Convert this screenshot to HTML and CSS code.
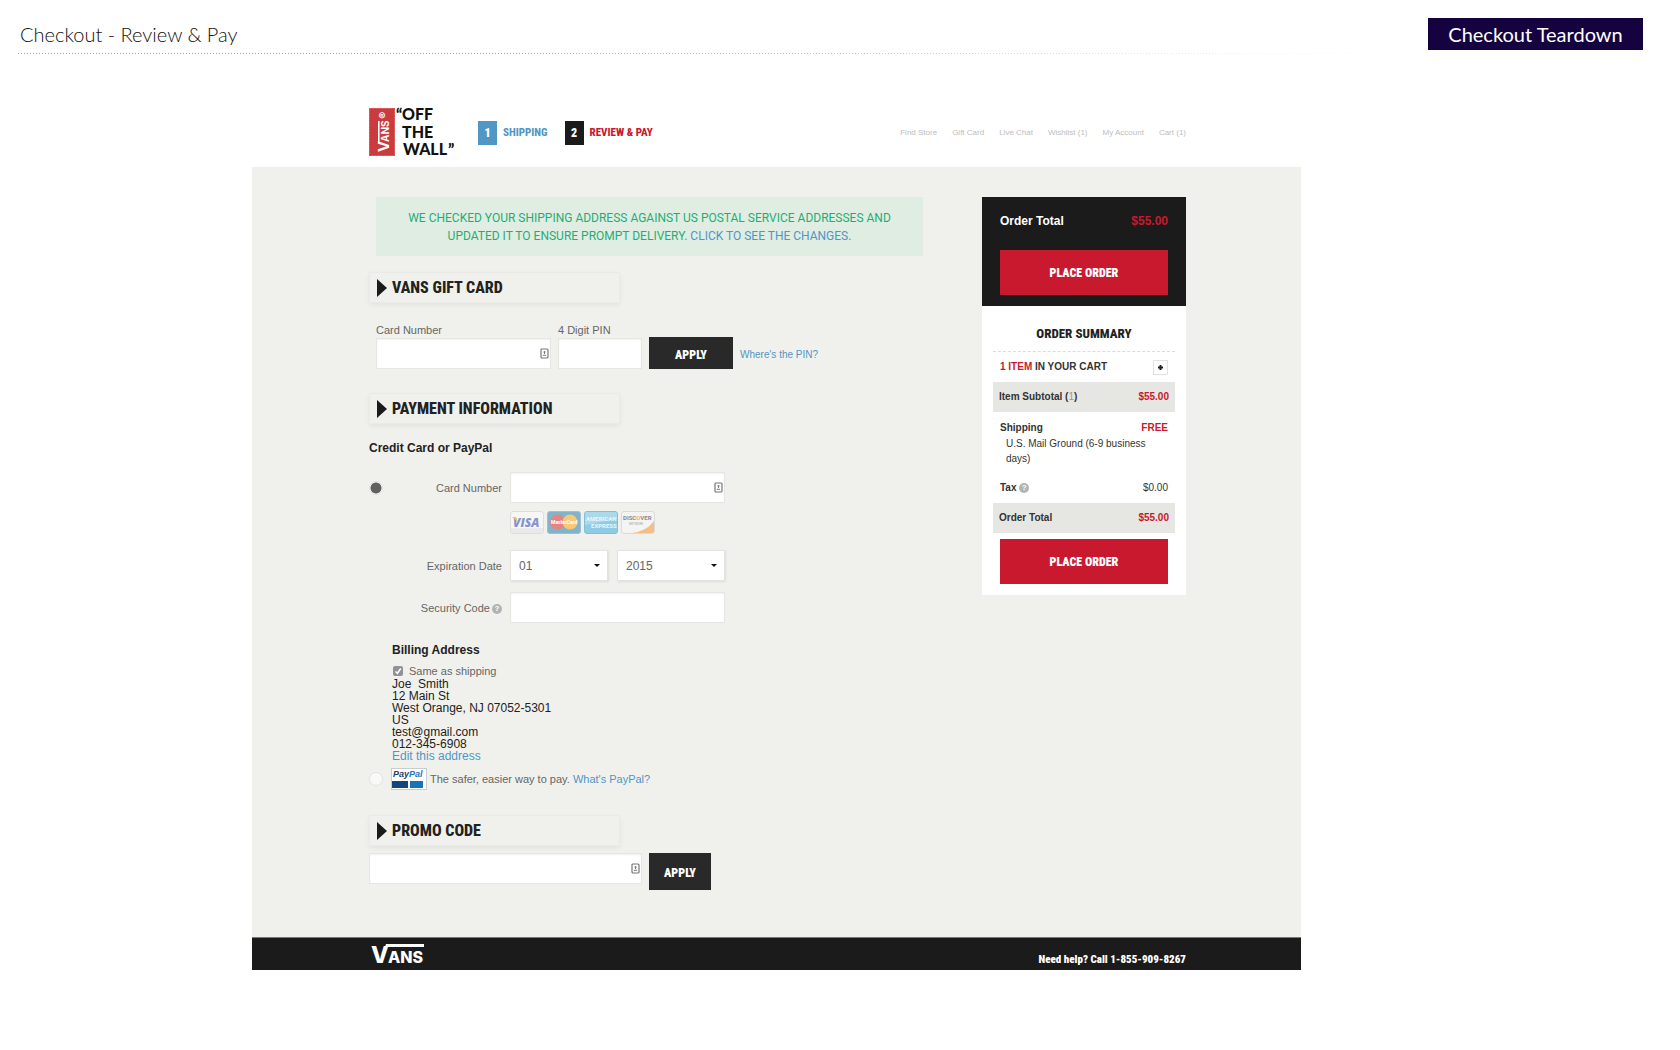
FILE: index.html
```html
<!DOCTYPE html>
<html lang="en">
<head>
<meta charset="utf-8">
<meta name="viewport" content="width=device-width, initial-scale=1">
<title>Checkout - Review &amp; Pay</title>
<link rel="stylesheet" href="styles.css">
</head>
<body>
<svg class="defs" aria-hidden="true">
  <symbol id="autofill" viewBox="0 0 9 11">
    <rect x="1" y="1" width="7" height="9" rx="1" fill="#fff" stroke="#777" stroke-width="1.2"/>
    <circle cx="4.5" cy="4" r="1" fill="#777"/>
    <path d="M4.5 4v2M2.8 7.3h3.4" stroke="#777" stroke-width="1"/>
  </symbol>
</svg>
<header class="topbar">
  <h1 class="topbar-title">Checkout - Review &amp; Pay</h1>
  <a class="topbar-tag" href="#">Checkout Teardown</a>
</header>

<div class="site">
  <header class="site-header">
    <svg class="logo" viewBox="0 0 86 49" role="img" aria-label="Vans Off The Wall">
      <rect x="0" y="0" width="26" height="48" fill="#cb3a3c"/>
      <path d="M.5.500h25v47H.5z" fill="none" stroke="#dd6a68" stroke-width="1" stroke-dasharray="2 1"/>
      <g transform="translate(20 44) rotate(-90)" fill="#fff" font-family="Inter, sans-serif" font-weight="700">
        <text x="0" y="0" font-size="15">V</text>
        <text x="10" y="0" font-size="10">ANS</text>
        <text x="33" y="-2" font-size="11">®</text>
        <rect x="9" y="-11" width="22" height="1.6"/>
      </g>
      <g class="logo-words">
        <text x="27" y="13">“</text>
        <text x="33" y="12">OFF</text>
        <text x="33" y="30">THE</text>
        <text x="34" y="47">WALL</text>
        <text x="79" y="48">”</text>
      </g>
    </svg>
    <ol class="steps">
      <li class="step"><span class="step-num">1</span><a href="#">SHIPPING</a></li>
      <li class="step step-current"><span class="step-num">2</span><a href="#">REVIEW &amp; PAY</a></li>
    </ol>
    <nav class="nav">
      <a href="#">Find Store</a><a href="#">Gift Card</a><a href="#">Live Chat</a><a href="#">Wishlist (1)</a><a href="#">My Account</a><a href="#">Cart (1)</a>
    </nav>
  </header>

  <div class="content">
    <main class="main">
      <p class="notice">WE CHECKED YOUR SHIPPING ADDRESS AGAINST US POSTAL SERVICE ADDRESSES AND<br>UPDATED IT TO ENSURE PROMPT DELIVERY. <a href="#">CLICK TO SEE THE CHANGES.</a></p>

      <h2 class="section-title">VANS GIFT CARD</h2>
      <div class="gift">
        <div class="gift-field gift-card">
          <label for="gift-number">Card Number</label>
          <div class="field"><input id="gift-number" type="text"><svg class="autofill"><use href="#autofill"/></svg></div>
        </div>
        <div class="gift-field gift-pin">
          <label for="gift-pin">4 Digit PIN</label>
          <div class="field"><input id="gift-pin" type="text"></div>
        </div>
        <button class="apply apply-gift" type="button">APPLY</button>
        <a class="pin-link" href="#">Where's the PIN?</a>
      </div>

      <h2 class="section-title">PAYMENT INFORMATION</h2>
      <h3 class="subtitle">Credit Card or PayPal</h3>

      <div class="payment">
        <input class="radio" type="radio" name="method" aria-label="Credit card" checked>
        <label class="row-label" for="card-number">Card Number</label>
        <div class="field"><input id="card-number" type="text"><svg class="autofill"><use href="#autofill"/></svg></div>

        <div class="cards">
          <svg viewBox="0 0 34 23" role="img" aria-label="Visa">
            <rect x=".5" y=".5" width="33" height="22" rx="2.5" fill="#f6f6f5" stroke="#dedede"/>
            <path d="M1 17h32v3q0 2-2 2H3q-2 0-2-2z" fill="#e9e9e9"/>
            <text x="3" y="16" font-size="12" font-weight="800" font-style="italic" fill="#8594cb" font-family="Open Sans, sans-serif">VISA</text>
            <path d="M2 6h4l2 5z" fill="#f2bd71"/>
          </svg>
          <svg viewBox="0 0 34 23" role="img" aria-label="MasterCard">
            <rect x=".5" y=".5" width="33" height="22" rx="2.5" fill="#82b3ca" stroke="#9ac2d3"/>
            <circle cx="10.500" cy="11" r="7.500" fill="#e58481"/>
            <circle cx="23" cy="11" r="7.500" fill="#f6c975"/>
            <text x="4" y="13" font-size="5" font-weight="700" fill="#fff" font-family="Roboto, sans-serif">MasterCard</text>
          </svg>
          <svg viewBox="0 0 34 23" role="img" aria-label="American Express">
            <rect x=".5" y=".5" width="33" height="22" rx="2.500" fill="#8fcbe5" stroke="#83bdd7"/>
            <path d="M1 3q0-2 2-2h28q2 0 2 2v5L1 14z" fill="#aad9ec"/>
            <g font-size="6" font-weight="700" fill="#e9f6fb" font-family="Roboto, sans-serif">
              <text x="2" y="10">AMERICAN</text>
              <text x="7" y="17">EXPRESS</text>
            </g>
          </svg>
          <svg viewBox="0 0 34 23" role="img" aria-label="Discover Network">
            <rect x=".5" y=".5" width="33" height="22" rx="2.500" fill="#f4f4f2" stroke="#dcdad6"/>
            <path d="M33 10v10q0 2-2 2H11Q26 20 33 10z" fill="#f5bd87"/>
            <text x="2" y="9" font-size="6" font-weight="700" fill="#8a8a8a" font-family="Roboto, sans-serif">DISC<tspan fill="#f3b064">O</tspan>VER</text>
            <text x="8" y="14" font-size="3" fill="#a5a5a5" font-family="Roboto, sans-serif">NETWORK</text>
          </svg>
        </div>

        <label class="row-label expiry-label" for="exp-month">Expiration Date</label>
        <div class="expiry">
          <div class="select select-month"><select id="exp-month"><option>01</option></select></div>
          <div class="select select-year"><select aria-label="Expiration year"><option>2015</option></select></div>
        </div>

        <label class="row-label" for="security">Security Code <span class="help help-raised">?</span></label>
        <div class="field"><input id="security" type="text"></div>
      </div>

      <div class="billing">
        <h3 class="billing-title">Billing Address</h3>
        <label class="same">
          <input type="checkbox" checked>
          <svg class="tick" viewBox="0 0 10 10" aria-hidden="true"><path d="M2.500 5.500 4.300 7.300 7.800 2.500" fill="none" stroke="#fff" stroke-width="1.500"/></svg>
          Same as shipping
        </label>
        <address>Joe&nbsp; Smith<br>12 Main St<br>West Orange, NJ 07052-5301<br>US<br>test@gmail.com<br>012-345-6908<br><a href="#">Edit this address</a></address>
      </div>

      <div class="paypal">
        <input class="radio" type="radio" name="method" id="paypal">
        <svg class="paypal-logo" viewBox="0 0 36 22" role="img" aria-label="PayPal">
          <rect x=".5" y=".5" width="35" height="21" fill="#fff" stroke="#c9cdd0"/>
          <text x="2" y="9" font-size="9" font-weight="700" font-style="italic" fill="#1c3f72" font-family="Liberation Sans, sans-serif">Pay<tspan fill="#2079b9">Pal</tspan></text>
          <rect x="1" y="13" width="16" height="7" fill="#15467b"/>
          <rect x="19" y="13" width="13" height="7" fill="#1573b8"/>
        </svg>
        <label for="paypal">The safer, easier way to pay. <a href="#">What's PayPal?</a></label>
      </div>

      <h2 class="section-title">PROMO CODE</h2>
      <div class="promo">
        <div class="field"><input type="text" aria-label="Promo code"><svg class="autofill"><use href="#autofill"/></svg></div>
        <button class="apply apply-promo" type="button">APPLY</button>
      </div>
    </main>

    <aside class="order">
      <div class="order-top">
        <p class="order-total"><span>Order Total</span><span class="red">$55.00</span></p>
        <button class="place" type="button">PLACE ORDER</button>
      </div>
      <div class="summary">
        <h2>ORDER SUMMARY</h2>
        <div class="line cart-line"><b><span class="red">1 ITEM</span> IN YOUR CART</b>
          <button class="expand" type="button" aria-label="Show items"><svg viewBox="0 0 5 5"><path d="M2.500 0v5M0 2.500h5" stroke="#222" stroke-width="2"/></svg></button></div>
        <div class="line shaded"><b>Item Subtotal (<span class="count">1</span>)</b><b class="red">$55.00</b></div>
        <div class="shipping">
          <div class="line"><b>Shipping</b><b class="red">FREE</b></div>
          <p>U.S. Mail Ground (6-9 business days)</p>
        </div>
        <div class="line tax"><span><b>Tax</b> <span class="help">?</span></span><span>$0.00</span></div>
        <div class="line shaded"><b>Order Total</b><b class="red">$55.00</b></div>
        <button class="place" type="button">PLACE ORDER</button>
      </div>
    </aside>
  </div>

  <footer class="footer">
    <svg class="footer-logo" viewBox="0 0 54 20" role="img" aria-label="Vans">
      <g fill="#fff" font-family="Inter, sans-serif" font-weight="800">
        <path d="M14 0h38v3H13z"/>
        <text x="-1" y="19" font-size="23">V</text>
        <text x="16" y="19" font-size="16">ANS</text>
      </g>
    </svg>
    <p>Need help? Call 1-855-909-8267</p>
  </footer>
</div>
</body>
</html>
```
FILE: styles.css
```css
:root { --condensed: "Roboto Condensed", "Open Sans Condensed", Roboto, sans-serif; }
* { box-sizing: border-box; }
body { margin: 0; background: #fff; color: #222; font: 11px/14px "Liberation Sans", Arial, sans-serif; }
h1, h2, h3, p, ol { margin: 0; padding: 0; }
a { color: #5295c5; text-decoration: none; }
button, input, select { font: inherit; margin: 0; border-radius: 0; }
svg { display: block; flex: none; overflow: visible; }
.defs { position: absolute; width: 0; height: 0; }
.red { color: #c8192e; }

.topbar { display: flex; justify-content: space-between; align-items: center; height: 54px; margin: 0 37px 54px 18px; padding-top: 14px; position: relative; }
.topbar::after { content: ""; position: absolute; left: 0; right: 0; bottom: 0; height: 1px; background: repeating-linear-gradient(90deg, #aaa 0 1px, transparent 1px 3px); mask-image: linear-gradient(90deg, #000 30%, transparent 85%); }
.topbar-title { padding-left: 2px; font: 300 20px/32px Lato, sans-serif; color: #111; }
.topbar-tag { width: 215px; height: 32px; margin-bottom: 1px; background: #15033f; color: #fff; font: 400 20px/32px Lato, sans-serif; text-align: center; }

.site { margin: 0 379px 80px 252px; }
.site-header { display: flex; align-items: center; height: 59px; padding: 0 115px 10px 117px; }
.logo { width: 86px; height: 49px; }
.logo-words { font-family: Lato, sans-serif; font-weight: 900; font-size: 16px; fill: #111; }
.steps { display: flex; gap: 17px; margin-left: 23px; list-style: none; }
.step { display: flex; align-items: center; gap: 6px; }
.step a { color: #5197c6; font: 800 11px/24px var(--condensed); }
.step-num { width: 19px; height: 24px; background: #5197c6; color: #fff; font: 900 12px/24px var(--condensed); text-align: center; }
.step-current .step-num { background: #1b1b1b; }
.step-current a { color: #c8192e; }
.nav { display: flex; gap: 15px; margin-left: auto; font-size: 8px; }
.nav a { color: #bdbdbd; }

.content { display: flex; justify-content: space-between; align-items: flex-start; min-height: 770px; padding: 30px 115px 46px 117px; background: #f0f1ec; }
.main { width: 554px; }
.notice { margin-left: 7px; padding: 12px 0 11px; background: #dfede3; color: #1fad76; font: 12px/18px Roboto, sans-serif; text-align: center; }
.section-title { display: flex; align-items: center; gap: 5px; width: 251px; height: 31px; padding-left: 7px; border: 1px solid #eaebe6; box-shadow: 0 2px 5px rgba(0, 0, 0, .06); font: 800 16px/29px var(--condensed); color: #222; }
.section-title::before { content: ""; border: solid transparent; border-width: 9px 0 9px 10px; border-left-color: #1b1b1b; }
.notice + .section-title { margin-top: 16px; }

label { color: #666; }
.field { position: relative; }
.field input { display: block; width: 100%; height: 31px; padding: 0 8px; border: 1px solid #e6e6e2; background: #fff; box-shadow: inset 0 1px 2px rgba(0, 0, 0, .06); }
.autofill { position: absolute; top: 10px; right: 2px; width: 9px; height: 11px; }
.apply { border: 0; padding: 3px 0 0; background: #292929; color: #fff; font: 900 12px/16px var(--condensed); }

.gift { display: flex; align-items: flex-end; margin: 20px 0 24px 7px; }
.gift-field label { display: block; line-height: 15px; }
.gift-card { width: 175px; margin-right: 7px; }
.gift-pin { width: 84px; margin-right: 7px; }
.apply-gift { width: 84px; height: 32px; margin-right: 7px; }
.pin-link { font-size: 10px; line-height: 28px; }

.subtitle { margin: 17px 0 16px; font-size: 12px; line-height: 15px; }
.payment { display: grid; grid-template-columns: 14px 119px 223px; align-items: center; }
.radio { appearance: none; width: 14px; height: 14px; border: 1px solid #e3e3e0; border-radius: 50%; background: #f9f9f8; }
.radio:checked { background: radial-gradient(circle, #606060 0 5px, #fff 6px); }
.row-label { grid-column: 2; text-align: right; }
.payment > .field, .cards, .expiry { grid-column: 3; margin-left: 8px; }
.cards { display: flex; gap: 3px; margin-top: 8px; }
.cards svg { width: 34px; height: 23px; }
.expiry { display: flex; justify-content: space-between; margin-top: 16px; margin-bottom: 11px; }
.expiry-label { padding-top: 5px; }
.select { position: relative; }
.select select { appearance: none; display: block; width: 100%; height: 31px; padding: 0 8px; border: 1px solid #e3e3df; background: #fff; box-shadow: 1px 1px 2px rgba(0, 0, 0, .08); color: #666; font-size: 12px; }
.select::after { content: ""; position: absolute; top: 14px; right: 8px; border: solid transparent; border-width: 3px 3px 0; border-top-color: #111; }
.select-month { width: 98px; }
.select-year { width: 108px; }
.help { display: inline-block; width: 10px; height: 10px; border-radius: 50%; background: #b3b3b1; color: #fff; font-size: 8px; font-weight: 700; line-height: 10px; text-align: center; vertical-align: middle; }
.help-raised { vertical-align: 1px; margin-left: -1px; }

.billing { margin: 19px 0 6px 23px; }
.billing-title { font-size: 12px; line-height: 16px; }
.same { display: flex; align-items: center; gap: 6px; position: relative; margin: 6px 0 0 1px; }
.same input { appearance: none; width: 10px; height: 10px; border-radius: 2px; background: #929296; }
.tick { position: absolute; left: 0; top: 2px; width: 10px; height: 10px; }
address { font-style: normal; font-size: 12px; line-height: 12px; }
.paypal { display: flex; align-items: center; margin-bottom: 25px; }
.paypal-logo { width: 36px; height: 22px; margin: 0 3px 0 8px; }
.promo { display: flex; align-items: flex-start; gap: 7px; margin-top: 7px; }
.promo .field { width: 273px; }
.apply-promo { width: 62px; height: 37px; }

.order { width: 204px; background: #fff; }
.order-top { padding: 15px 18px 11px; background: #1b1b1b; }
.order-total { display: flex; justify-content: space-between; margin-bottom: 20px; color: #fff; font-weight: 700; font-size: 12px; line-height: 18px; }
.place { display: block; width: 100%; height: 45px; border: 0; padding: 0; background: #c8192e; color: #fff; font: 900 12px/16px var(--condensed); }
.summary { display: flex; flex-direction: column; padding: 18px 11px 11px; font-size: 10px; color: #333; }
.summary h2 { padding-bottom: 7px; border-bottom: 1px dashed #dcdcdc; font: 800 13px/20px var(--condensed); text-align: center; color: #222; }
.line { display: flex; justify-content: space-between; align-items: center; padding: 0 7px; }
.cart-line { height: 30px; }
.expand { display: grid; place-items: center; width: 15px; height: 15px; padding: 0; border: 1px solid #e2e2e2; background: #fff; }
.expand svg { width: 5px; height: 5px; }
.shaded { height: 30px; padding: 0 6px; background: #e6e7e2; }
.count { color: #999; font-weight: 400; }
.shipping { padding-top: 9px; }
.shipping p { padding: 1px 7px 0 13px; line-height: 15px; }
.tax { height: 30px; margin-top: 7px; }
.summary .place { margin: 6px 7px 0; width: auto; }

.footer { display: flex; justify-content: space-between; align-items: flex-start; height: 33px; padding: 6px 115px 0 120px; background: #1b1b1b; color: #fff; border-top: 1px solid #777; }
.footer-logo { width: 54px; height: 20px; }
.footer p { padding-top: 9px; font: 900 11px/14px var(--condensed); }
```
